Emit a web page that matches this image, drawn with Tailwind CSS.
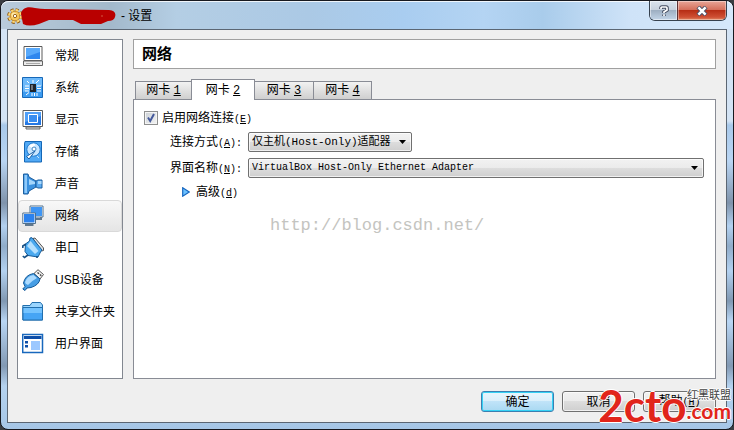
<!DOCTYPE html>
<html lang="zh-CN">
<head>
<meta charset="utf-8">
<title>设置</title>
<script src="https://cdn.jsdelivr.net/npm/@tailwindcss/browser@4"></script>
</head>
<body class="bg-[#3a3d42] font-['Liberation_Sans','Noto_Sans_CJK_SC',sans-serif] text-xs text-black">
<div class="relative flex min-h-screen flex-col rounded-lg border border-[#17191f] bg-[linear-gradient(180deg,#d3e3f4_0px,#d3e3f4_120px,#a9c9ea_124px,#b9d5f3_160px,#7f93ab_202px,#b3d1f0_225px,#90acc9_245px,#b3d1f0_270px,#8098b2_300px,#b9d6f4_320px,#8299b3_365px,#b4d2ef_385px,#a6c6e6_100%)] px-1.5 pb-1.5">
  <header class="relative -mx-1.5 flex h-7 items-center rounded-t-lg border-t border-white/80 bg-[linear-gradient(90deg,#b9cbdb_0%,#a3b9cb_15%,#b4cee4_24%,#abc9e5_42%,#a9cdf0_55%,#b4d4f3_66%,#a9cceb_74%,#cfe3f8_86%,#d5e8fb_100%)] pl-1.5">
    <svg class="size-4" viewBox="0 0 16 16" aria-hidden="true">
      <circle cx="8" cy="8" r="6.4" fill="none" stroke="#8b5610" stroke-width="3" stroke-dasharray="3 2"/>
      <circle cx="8" cy="8" r="5" fill="#f6c65b" stroke="#b3771e"/>
      <circle cx="8" cy="8" r="6" fill="none" stroke="#ffd873" stroke-width="2" stroke-dasharray="2.7 2"/>
      <circle cx="7" cy="7" r="2.5" fill="#ffe9a8"/>
      <circle cx="8" cy="8" r="1.7" fill="#fff" stroke="#9a6418"/>
    </svg>
    <svg class="-ml-0.5 h-5 w-24" viewBox="0 0 96 20" aria-hidden="true">
      <path d="M0 8C1 2 6 0 14 2Q20 3 24 3L88 4Q96 5 94 11Q93 15 87 15L80 18H60L52 14H28L18 18Q8 21 2 18Z" fill="#b90000"/>
      <circle cx="81" cy="10" r=".7" fill="#dc7a5b"/>
    </svg>
    <h1 class="ml-1 text-xs">- 设置</h1>
    <div class="absolute -top-px right-1.5 flex h-5 overflow-hidden rounded-b-md border border-t-0 border-[#36414e]">
      <button aria-label="帮助" class="flex w-7 items-center justify-center border-r border-[#5c3033] bg-[linear-gradient(180deg,#dae3ed_0%,#c8d2de_45%,#9eafc2_50%,#c3d5e8_100%)] shadow-[inset_0_0_0_1px_#ffffff80]">
        <svg class="h-3 w-2.5" viewBox="0 0 10 12" fill="none"><path d="M2 4V3Q2 2 3 2H7Q8 2 8 3V5L5 7V8M5 9.5V11" stroke="#454d60" stroke-width="3.6"/><path d="M2 4V3Q2 2 3 2H7Q8 2 8 3V5L5 7V8M5 9.3V11" stroke="#fff" stroke-width="1.7"/></svg>
      </button>
      <button aria-label="关闭" class="flex w-12 items-center justify-center bg-[linear-gradient(180deg,#e8a698_0%,#d5705c_45%,#b72e15_50%,#cf5034_85%,#e08a65_100%)] shadow-[inset_0_0_0_1px_#ffffff60]">
        <svg class="h-2.5 w-3" viewBox="0 0 12 10" fill="none"><path d="M2 1L10 9M10 1L2 9" stroke="#4b5067" stroke-width="4.4"/><path d="M2.4 1.4L9.6 8.6M9.6 1.4L2.4 8.6" stroke="#fff" stroke-width="2.5"/></svg>
      </button>
    </div>
  </header>

  <main class="flex flex-1 flex-col border border-[#5b6673] bg-[#efefef] px-2.5 pt-[9px] pr-2.5 pb-2.5 pl-[9px]">
    <div class="flex flex-1 gap-2.5">
      <nav class="w-[106px] shrink-0 border border-[#828790] bg-white">
        <ul>
          <li><a href="#" class="flex h-8 items-center gap-[11px] pl-1">
            <svg class="size-[22px] shrink-0" viewBox="0 0 22 22"><path d="M2 1.5H20V15.5H2Z" fill="#fff" stroke="#5a5a5a"/><path d="M4 3H18V14H4Z" fill="#2f87ee"/><path d="M4 3H18V7L4 12Z" fill="#58a9fb"/><path d="M1.5 16H20.5V20.5H1.5Z" fill="#ececec" stroke="#666"/><path d="M4 18.5H18" stroke="#aaa"/></svg>
            <span>常规</span></a></li>
          <li><a href="#" class="flex h-8 items-center gap-[11px] pl-1">
            <svg class="size-[22px] shrink-0" viewBox="0 0 22 22"><path d="M.5.5H20.5V20.5H.5Z" fill="#3c9bf0" stroke="#1668b8"/><path d="M1 1H20V9L1 15Z" fill="#6db9fa"/><path d="M8 7H14V15H8Z" fill="#20242b"/><path d="M9 8H11V13H9Z" fill="#70757d"/><path d="M3 9H7M3 11.5H7M3 14H7M15 9H19M15 11.5H19M15 14H19M10 16V19M12.5 16V19M15 16V19M4 18L7 15.5M14 6L17 3M11 3V6M5 4L7 6" stroke="#fff"/></svg>
            <span>系统</span></a></li>
          <li><a href="#" class="flex h-8 items-center gap-[11px] pl-1">
            <svg class="size-[22px] shrink-0" viewBox="0 0 22 22"><path d="M1 1.5H20.5V17.5H1Z" fill="#fff" stroke="#5a5a5a"/><path d="M3 3H19V16H3Z" fill="#2578e4"/><path d="M3 3H19V7L3 13Z" fill="#4f9ff8"/><path d="M6.5 5.5H15.5V13.5H6.5Z" fill="#398df0" stroke="#fff"/><path d="M4 18H18V20H4Z" fill="#ddd" stroke="#666"/></svg>
            <span>显示</span></a></li>
          <li><a href="#" class="flex h-8 items-center gap-[11px] pl-1">
            <svg class="size-[22px] shrink-0" viewBox="0 0 22 22"><path d="M3 .5H19.5V21H2.5V3Z" fill="#51a9f5" stroke="#1467b6"/><circle cx="11.5" cy="8.5" r="6.7" fill="#c9e6ff" stroke="#207bcf"/><path d="M7 5Q10 2 13 3L12 8Z" fill="#fff"/><circle cx="12" cy="8" r="2" fill="#fff" stroke="#4187c3"/><path d="M13 10L7 18L4.5 15.5Z" fill="#fff" stroke="#1962aa"/><path d="M15 15L17 17" stroke="#cbe7ff"/></svg>
            <span>存储</span></a></li>
          <li><a href="#" class="flex h-8 items-center gap-[11px] pl-1">
            <svg class="size-[22px] shrink-0" viewBox="0 0 22 22"><path d="M1.5 1H6L7 4L14 8V14L7 18L6 21H1.5Z" fill="#3b91df" stroke="#1d5f9f"/><path d="M2.5 2H5V20H2.5Z" fill="#8fcafa"/><path d="M7 6L13 9V11L7 12Z" fill="#a5d6fb"/><path d="M14 8L16 7H20V15H16L14 14Z" fill="#5aaaf0" stroke="#1d5f9f"/><path d="M16 8H19.5V11H16Z" fill="#a8d8fc"/></svg>
            <span>声音</span></a></li>
          <li><a href="#" aria-current="page" class="flex h-8 items-center gap-[11px] rounded-sm border border-[#d9d9d9] bg-linear-to-b from-[#f8f8f8] to-[#e5e5e5] pl-[3px]">
            <svg class="size-[22px] shrink-0" viewBox="0 0 22 22"><path d="M8 1H21V12H8Z" fill="#fff" stroke="#51718d"/><path d="M9 2H20V11H9Z" fill="#3e95f4"/><path d="M14 13V14H19V12" fill="none" stroke="#60788e" stroke-width="2"/><path d="M.8 8H13.5V18.5H.8Z" fill="#fff" stroke="#51718d"/><path d="M2 9H12.5V17.5H2Z" fill="#2c82ed"/><path d="M3 20H11.5" stroke="#60788e" stroke-width="2"/></svg>
            <span>网络</span></a></li>
          <li><a href="#" class="flex h-8 items-center gap-[11px] pl-1">
            <svg class="size-[22px] shrink-0" viewBox="0 0 22 22"><path d="M11 1.5L13 1L21.5 11V13.5L19.5 14Z" fill="#e4e4e4" stroke="#565656"/><path d="M8 1L10 .7L20 13L18.5 15L16 20L6 18.5L3 14.5L3.5 7L7.5 4Z" fill="#4ba9ef" stroke="#155c9c"/><path d="M8.5 4L16.5 14L13 17L5 9Z" fill="#b4e0ff"/><path d="M4 7L.8 9V11M6 18L2.5 20.5L.8 19M15 19V21" fill="none" stroke="#174f83" stroke-width="1.6"/></svg>
            <span>串口</span></a></li>
          <li><a href="#" class="flex h-8 items-center gap-[11px] pl-1">
            <svg class="size-[22px] shrink-0" viewBox="0 0 22 22"><path d="M12 4.5L16 .7L21.5 5.5L18 10Z" fill="#f5f5f5" stroke="#555"/><path d="M15.5 3.5L17 4.8M18 5.5L19.3 6.8" stroke="#444" stroke-width="1.5"/><path d="M11.5 4.5L18 10Q17 16 9 18.5L5 19L3 21.5L.8 20L3 17.5L1.5 14Q3 6 11.5 4.5Z" fill="#469de4" stroke="#145997"/><path d="M11.5 6L15 9Q11 11 6 16Q3 15 3 13Q5 7 11.5 6Z" fill="#acdbff"/></svg>
            <span>USB设备</span></a></li>
          <li><a href="#" class="flex h-8 items-center gap-[11px] pl-1">
            <svg class="size-[22px] shrink-0" viewBox="0 0 22 22"><path d="M.8 4.5H8L10 1.5H18.5L20.5 4V19H.8Z" fill="#9bd5fd" stroke="#226fad"/><path d="M1 6.5H20.5V19H1Z" fill="#46a5f5" stroke="#226fad"/><path d="M1.5 7H20V12H1.5Z" fill="#74c3fe"/></svg>
            <span class="whitespace-nowrap">共享文件夹</span></a></li>
          <li><a href="#" class="flex h-8 items-center gap-[11px] pl-1">
            <svg class="size-[22px] shrink-0" viewBox="0 0 22 22"><path d="M.7 1.5H20.5V19.5H.7Z" fill="#fff" stroke="#1868bd" stroke-width="1.5"/><path d="M2 3H19.5V6H2Z" fill="#0d4ea8"/><path d="M3 8H6V10.5H3ZM3 12H6V14.5H3Z" fill="#0d4ea8"/><path d="M9 8H18V17H9Z" fill="#9cc8ff"/></svg>
            <span>用户界面</span></a></li>
        </ul>
      </nav>

      <section class="flex min-w-0 flex-1 flex-col">
        <h2 class="flex h-[30px] items-center border border-[#a0a0a0] bg-white pl-2 text-[15px] font-bold">网络</h2>
        <div role="tablist" class="mt-2.5 flex h-5 items-end pl-0.5">
          <button role="tab" class="h-[18px] w-14 border border-r-0 border-b-0 border-[#898c95] bg-linear-to-b from-[#f2f2f2] to-[#cfcfcf] leading-4">网卡 <u class="font-['Liberation_Mono',monospace]">1</u></button>
          <button role="tab" aria-selected="true" class="relative z-10 -mb-px h-[21px] w-16 border border-b-0 border-[#898c95] bg-white leading-4">网卡 <u class="font-['Liberation_Mono',monospace]">2</u></button>
          <button role="tab" class="h-[18px] w-[59px] border border-b-0 border-l-0 border-[#898c95] bg-linear-to-b from-[#f2f2f2] to-[#cfcfcf] leading-4">网卡 <u class="font-['Liberation_Mono',monospace]">3</u></button>
          <button role="tab" class="h-[18px] w-[58px] border border-b-0 border-l-0 border-[#898c95] bg-linear-to-b from-[#f2f2f2] to-[#cfcfcf] leading-4">网卡 <u class="font-['Liberation_Mono',monospace]">4</u></button>
        </div>
        <form class="relative flex-1 border border-[#898c95] bg-white pt-2.5 pr-[11px] pl-2.5">
          <label class="flex h-4 items-center gap-1">
            <span class="relative flex">
              <input type="checkbox" checked class="size-3.5 appearance-none border border-[#8e8f8f] bg-[linear-gradient(135deg,#cbd0d6,#f4f4f4)] shadow-[inset_0_0_0_1px_#f4f4f4]">
              <svg class="pointer-events-none absolute inset-0 size-3.5" viewBox="0 0 14 14"><path d="M4 6.5L6.2 10L10 3" fill="none" stroke="#44599b" stroke-width="2"/></svg>
            </span>
            <span>启用网络连接<span class="font-['Liberation_Mono',monospace] text-[10px]">(<u>E</u>)</span></span>
          </label>
          <div class="mt-1.5 grid grid-cols-[98px_1fr] items-center gap-x-1.5 gap-y-1.5">
            <label for="mode" class="text-right whitespace-nowrap">连接方式<span class="font-['Liberation_Mono',monospace] text-[10px]">(<u>A</u>):</span></label>
            <div class="relative w-[164px]">
              <select id="mode" class="block h-5 w-full appearance-none rounded-xs border border-[#707070] bg-[linear-gradient(180deg,#f2f2f2_0%,#ebebeb_50%,#dddddd_50%,#cfcfcf_100%)] pl-[3px] font-['Liberation_Mono','Noto_Sans_CJK_SC',monospace] text-[11px] leading-4 shadow-[inset_0_0_0_1px_#ffffffb0]"><option>仅主机(Host-Only)适配器</option></select>
              <svg class="pointer-events-none absolute top-2 right-1.5 h-1 w-[7px]" viewBox="0 0 7 4"><path d="M0 0H7L3.5 4Z"/></svg>
            </div>
            <label for="name" class="text-right whitespace-nowrap">界面名称<span class="font-['Liberation_Mono',monospace] text-[10px]">(<u>N</u>):</span></label>
            <div class="relative">
              <select id="name" class="block h-5 w-full appearance-none rounded-xs border border-[#707070] bg-[linear-gradient(180deg,#f2f2f2_0%,#ebebeb_50%,#dddddd_50%,#cfcfcf_100%)] pl-[3px] font-['Liberation_Mono',monospace] text-[10px] leading-4 shadow-[inset_0_0_0_1px_#ffffffb0]"><option>VirtualBox Host-Only Ethernet Adapter</option></select>
              <svg class="pointer-events-none absolute top-2 right-1.5 h-1 w-[7px]" viewBox="0 0 7 4"><path d="M0 0H7L3.5 4Z"/></svg>
            </div>
          </div>
          <button type="button" class="mt-1.5 ml-[38px] flex h-4 items-center gap-1.5">
            <svg class="h-2.5 w-2" viewBox="0 0 8 10"><path d="M.7.8L7.3 5L.7 9.2Z" fill="#6cc1ff" stroke="#1767c0" stroke-width="1.2"/></svg>
            <span>高级<span class="font-['Liberation_Mono',monospace] text-[10px]">(<u>d</u>)</span></span>
          </button>
          <p class="mt-4 ml-[126px] font-['Liberation_Mono',monospace] text-[17px] leading-5 text-[#c4c4c0]">http://blog.csdn.net/</p>
        </form>
      </section>
    </div>

    <footer class="mt-3 flex justify-end gap-2">
      <button class="h-[21px] w-[73px] rounded-[3px] border border-[#3c7fb1] bg-[linear-gradient(180deg,#e8f5fc_0%,#d9effb_50%,#c0e3f8_50%,#a9d9f2_100%)] leading-4 shadow-[inset_0_0_0_1px_#35d2f5]">确定</button>
      <button class="h-[21px] w-[73px] rounded-[3px] border border-[#707070] bg-[linear-gradient(180deg,#f2f2f2_0%,#ebebeb_50%,#dddddd_50%,#cfcfcf_100%)] leading-4 shadow-[inset_0_0_0_1px_#ffffffb0]">取消</button>
      <button class="h-[21px] w-[73px] rounded-[3px] border border-[#707070] bg-[linear-gradient(180deg,#f2f2f2_0%,#ebebeb_50%,#dddddd_50%,#cfcfcf_100%)] leading-4 shadow-[inset_0_0_0_1px_#ffffffb0]">帮助<span class="font-['Liberation_Mono',monospace] text-[10px]">(<u>H</u>)</span></button>
    </footer>
  </main>

  <div class="pointer-events-none absolute right-0.5 bottom-2 flex h-9 items-end font-[Lato,'Noto_Sans_CJK_SC',sans-serif] text-[#e1251b] [text-shadow:1px_0_#fff,-1px_0_#fff,0_1px_#fff,0_-1px_#fff]">
    <span class="text-[44px] leading-8 font-bold">2cto</span>
    <span class="flex flex-col items-end">
      <span class="text-[11px] leading-3 text-[#444]">红黑联盟</span>
      <span class="text-[21px] leading-5 font-bold">.com</span>
    </span>
  </div>
</div>
</body>
</html>
